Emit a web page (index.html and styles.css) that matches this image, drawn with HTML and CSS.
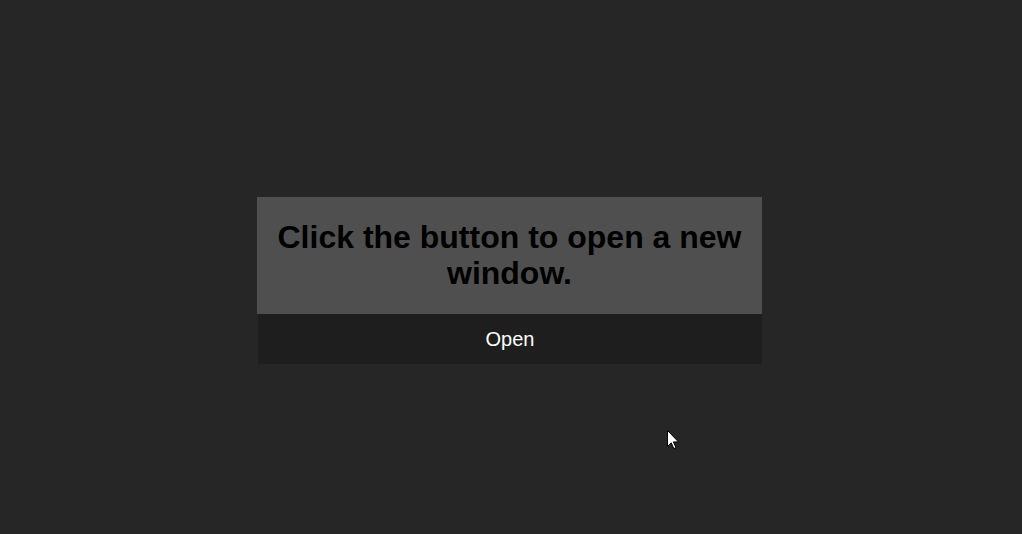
FILE: index.html
```html
<!DOCTYPE html>
<html lang="en">
<head>
<meta charset="utf-8">
<title>Open window</title>
<link rel="stylesheet" href="styles.css">
</head>
<body>
<main class="page">
  <section class="card">
    <div class="panel">
      <h1 class="title">Click the button to open a new window.</h1>
    </div>
    <button class="open-btn" type="button">Open</button>
  </section>
</main>
<svg class="cursor" width="13" height="20" viewBox="0 0 13 20" aria-hidden="true">
  <path d="M0.5 0.5 L0.5 16.5 L4.2 12.8 L6.8 18.6 L9 17.6 L6.4 11.9 L11.5 11.9 Z" fill="#fff" stroke="#000" stroke-width="1"/>
</svg>
</body>
</html>
```
FILE: styles.css
```css
html, body {
  margin: 0;
  padding: 0;
  height: 100%;
}
body {
  background: #262626;
  font-family: "Liberation Sans", Arial, sans-serif;
  position: relative;
  overflow: hidden;
}
.page {
  display: flex;
  justify-content: flex-start;
  padding: 197px 0 0 257px;
}
.card {
  width: 505px;
  display: flex;
  flex-direction: column;
}
.panel {
  background: #4f4f4f;
  height: 117px;
  display: flex;
  align-items: center;
  justify-content: center;
}
.title {
  margin: 0;
  padding-bottom: 2px;
  font-size: 32px;
  line-height: 36px;
  font-weight: bold;
  color: #000000;
  text-align: center;
}
.open-btn {
  margin: 0 0 0 1px;
  width: 504px;
  height: 50px;
  border: 0;
  background: #1e1e1e;
  color: #ffffff;
  font-family: "Liberation Sans", Arial, sans-serif;
  font-size: 20px;
  padding: 1px 0 0 0;
}
.cursor {
  position: absolute;
  left: 667px;
  top: 430px;
}
```
